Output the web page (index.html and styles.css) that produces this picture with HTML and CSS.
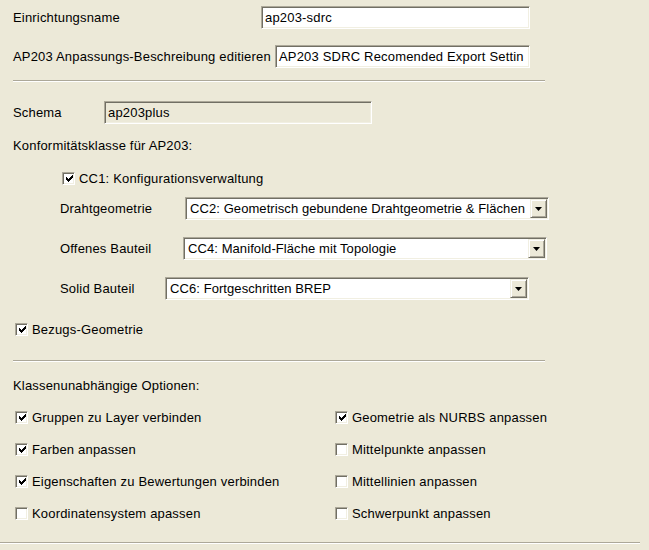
FILE: index.html
```html
<!DOCTYPE html>
<html>
<head>
<meta charset="utf-8">
<link rel="stylesheet" href="styles.css">
</head>
<body>
<div class="panel">
  <div class="row r1">
    <span class="lbl w-name">Einrichtungsname</span>
    <div class="field f-name">ap203-sdrc</div>
  </div>
  <div class="row r2">
    <span class="lbl w-desc">AP203 Anpassungs-Beschreibung editieren</span>
    <div class="field f-desc">AP203 SDRC Recomended Export Settin</div>
  </div>
  <div class="sep sep1"></div>
  <div class="row r3">
    <span class="lbl w-schema">Schema</span>
    <div class="field disabled f-schema">ap203plus</div>
  </div>
  <div class="text t-konf">Konformitätsklasse für AP203:</div>
  <div class="check cc1">
    <span class="box checked"><svg viewBox="0 0 7 7" width="7" height="7"><path d="M0 2h1v1h1v1h1v-1h1v-1h1v-1h1v-1h1v3h-1v1h-1v1h-1v1h-1v1h-1v-1h-1v-1h-1z" fill="#000"/></svg></span>
    <span>CC1: Konfigurationsverwaltung</span>
  </div>
  <div class="row sel-row sr1">
    <span class="lbl w-draht">Drahtgeometrie</span>
    <div class="select"><span class="sel-text">CC2: Geometrisch gebundene Drahtgeometrie &amp; Flächen</span><span class="sel-btn"><svg viewBox="0 0 7 4" width="7" height="4"><path d="M0 0h7l-3.5 4z" fill="#000"/></svg></span></div>
  </div>
  <div class="row sel-row sr2">
    <span class="lbl w-offen">Offenes Bauteil</span>
    <div class="select"><span class="sel-text">CC4: Manifold-Fläche mit Topologie</span><span class="sel-btn"><svg viewBox="0 0 7 4" width="7" height="4"><path d="M0 0h7l-3.5 4z" fill="#000"/></svg></span></div>
  </div>
  <div class="row sel-row sr3">
    <span class="lbl w-solid">Solid Bauteil</span>
    <div class="select"><span class="sel-text">CC6: Fortgeschritten BREP</span><span class="sel-btn"><svg viewBox="0 0 7 4" width="7" height="4"><path d="M0 0h7l-3.5 4z" fill="#000"/></svg></span></div>
  </div>
  <div class="check bezug">
    <span class="box checked"><svg viewBox="0 0 7 7" width="7" height="7"><path d="M0 2h1v1h1v1h1v-1h1v-1h1v-1h1v-1h1v3h-1v1h-1v1h-1v1h-1v1h-1v-1h-1v-1h-1z" fill="#000"/></svg></span>
    <span>Bezugs-Geometrie</span>
  </div>
  <div class="sep sep2"></div>
  <div class="text t-klassen">Klassenunabhängige Optionen:</div>
  <div class="options">
    <div class="check"><span class="box checked"><svg viewBox="0 0 7 7" width="7" height="7"><path d="M0 2h1v1h1v1h1v-1h1v-1h1v-1h1v-1h1v3h-1v1h-1v1h-1v1h-1v1h-1v-1h-1v-1h-1z" fill="#000"/></svg></span><span>Gruppen zu Layer verbinden</span></div>
    <div class="check"><span class="box checked"><svg viewBox="0 0 7 7" width="7" height="7"><path d="M0 2h1v1h1v1h1v-1h1v-1h1v-1h1v-1h1v3h-1v1h-1v1h-1v1h-1v1h-1v-1h-1v-1h-1z" fill="#000"/></svg></span><span>Geometrie als NURBS anpassen</span></div>
    <div class="check"><span class="box checked"><svg viewBox="0 0 7 7" width="7" height="7"><path d="M0 2h1v1h1v1h1v-1h1v-1h1v-1h1v-1h1v3h-1v1h-1v1h-1v1h-1v1h-1v-1h-1v-1h-1z" fill="#000"/></svg></span><span>Farben anpassen</span></div>
    <div class="check"><span class="box"></span><span>Mittelpunkte anpassen</span></div>
    <div class="check"><span class="box checked"><svg viewBox="0 0 7 7" width="7" height="7"><path d="M0 2h1v1h1v1h1v-1h1v-1h1v-1h1v-1h1v3h-1v1h-1v1h-1v1h-1v1h-1v-1h-1v-1h-1z" fill="#000"/></svg></span><span>Eigenschaften zu Bewertungen verbinden</span></div>
    <div class="check"><span class="box"></span><span>Mittellinien anpassen</span></div>
    <div class="check"><span class="box"></span><span>Koordinatensystem apassen</span></div>
    <div class="check"><span class="box"></span><span>Schwerpunkt anpassen</span></div>
  </div>
  <div class="sep sep3"></div>
</div>
</body>
</html>
```

FILE: styles.css
```css
html, body {
  margin: 0;
  padding: 0;
  background: #ece9d8;
}
body {
  font-family: "Liberation Sans", Arial, sans-serif;
  font-size: 13px;
  letter-spacing: 0.18px;
  color: #000;
  width: 649px;
  height: 550px;
  overflow: hidden;
}
.panel {
  display: flex;
  flex-direction: column;
  padding-left: 13px;
}
.row {
  display: flex;
  align-items: center;
  height: 23px;
}
.lbl {
  white-space: nowrap;
  flex: none;
}
.w-name { width: 248px; }
.w-desc { width: 262px; }
.w-schema { width: 91px; }
.field {
  box-sizing: border-box;
  height: 23px;
  background: #fff;
  border-top: 1px solid #aca899;
  border-left: 1px solid #aca899;
  border-bottom: 1px solid #fff;
  border-right: 1px solid #fff;
  box-shadow: inset 1px 1px 0 #716f64, inset -1px -1px 0 #f1efe2;
  padding: 0 0 0 3px;
  line-height: 21px;
  white-space: nowrap;
  overflow: hidden;
}
.field.disabled { background: #ece9d8; }
.f-name { width: 269px; }
.f-desc { width: 255px; }
.f-schema { width: 268px; }
.r1 { margin-top: 6px; }
.r2 { margin-top: 16px; }
.sep {
  height: 1px;
  border-bottom: 1px solid #fff;
  background: #aca899;
  width: 532px;
}
.sep1 { margin-top: 12px; }
.r3 { margin-top: 19px; }
.text {
  height: 16px;
  line-height: 16px;
}
.t-konf { margin-top: 14px; }
.check {
  display: flex;
  align-items: center;
  height: 16px;
  white-space: nowrap;
}
.box {
  box-sizing: border-box;
  width: 13px;
  height: 13px;
  flex: none;
  margin-right: 4px;
  background: #fff;
  border-top: 1px solid #aca899;
  border-left: 1px solid #aca899;
  border-bottom: 1px solid #fff;
  border-right: 1px solid #fff;
  box-shadow: inset 1px 1px 0 #716f64, inset -1px -1px 0 #f1efe2;
  display: flex;
  align-items: center;
  justify-content: center;
}
.box svg { display: block; margin-left: 1px; margin-top: 1px; }
.cc1 { margin-top: 16px; margin-left: 49px; }
.sel-row { padding-left: 47px; }
.sr1 { margin-top: 11px; }
.sr2 { margin-top: 17px; }
.sr3 { margin-top: 17px; }
.w-draht { width: 125px; }
.w-offen { width: 123px; }
.w-solid { width: 105px; }
.select {
  box-sizing: border-box;
  width: 364px;
  height: 23px;
  background: #fff;
  border-top: 1px solid #aca899;
  border-left: 1px solid #aca899;
  border-bottom: 1px solid #fff;
  border-right: 1px solid #fff;
  box-shadow: inset 1px 1px 0 #716f64, inset -1px -1px 0 #f1efe2;
  display: flex;
  align-items: center;
  padding: 1px;
}
.sel-text {
  flex: 1;
  padding-left: 3px;
  letter-spacing: 0.08px;
  white-space: nowrap;
  overflow: hidden;
}
.sel-btn {
  box-sizing: border-box;
  flex: none;
  width: 17px;
  height: 19px;
  background: #ece9d8;
  border-top: 1px solid #f1efe2;
  border-left: 1px solid #f1efe2;
  border-right: 1px solid #716f64;
  border-bottom: 1px solid #716f64;
  box-shadow: inset 1px 1px 0 #fff, inset -1px -1px 0 #aca899;
  display: flex;
  align-items: center;
  justify-content: center;
}
.sel-btn svg { display: block; }
.bezug { margin-top: 21px; margin-left: 2px; }
.sep2 { margin-top: 23px; }
.t-klassen { margin-top: 16px; }
.options {
  display: grid;
  grid-template-columns: 320px 1fr;
  row-gap: 16px;
  margin-top: 15px;
  padding-left: 2px;
}
.sep3 {
  margin-top: 21px;
  margin-left: -13px;
  width: 640px;
}
```
